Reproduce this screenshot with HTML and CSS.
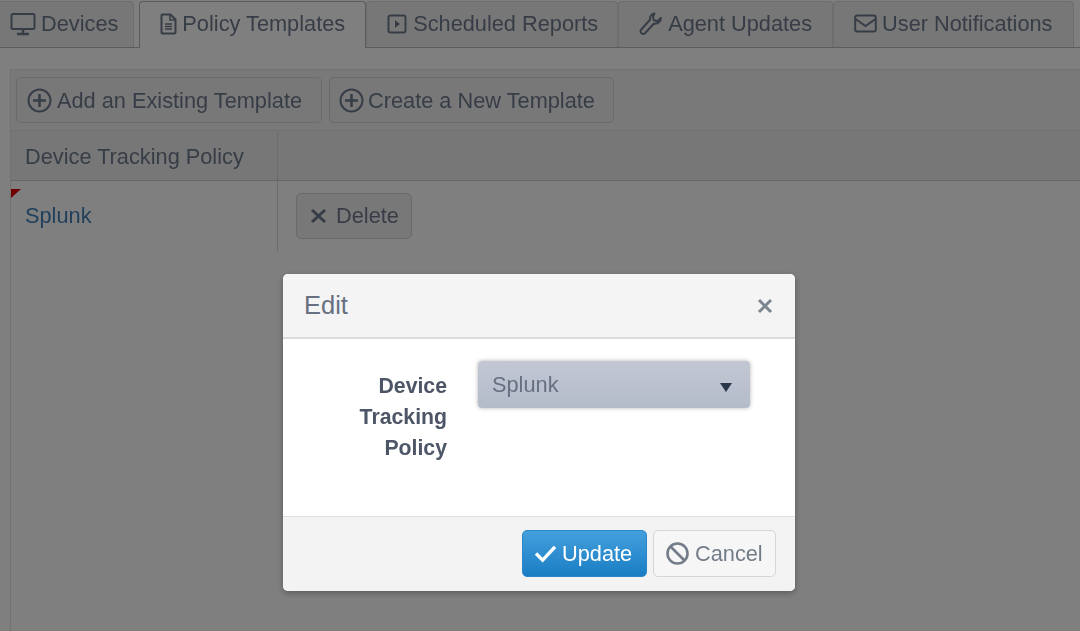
FILE: index.html
```html
<!DOCTYPE html>
<html lang="en">
<head>
    <meta charset="UTF-8">
    <title>Policy Templates</title>
    <link rel="stylesheet" href="styles.css">
</head>
<body>
    <ul class="tabs">
        <li class="tab tab-first">
            <svg class="icon" width="26" height="24" viewBox="0 0 26 24" fill="none" stroke="currentColor" stroke-width="2"><rect x="1.500" y="2" width="23" height="15" rx="1.500"/><path d="M13 17v4M7 22h12" stroke-width="2.500"/></svg>
            Devices
        </li>
        <li class="tab tab-active">
            <svg class="icon" width="17" height="22" viewBox="0 0 17 22" fill="none" stroke="currentColor" stroke-width="2"><path d="M2.500 1.500h8l5 5v13a1 1 0 0 1-1 1h-12a1 1 0 0 1-1-1v-17a1 1 0 0 1 1-1z"/><path d="M10 2v5h5M5 11h7M5 13.500h7M5 16h7" stroke-width="1.500"/></svg>
            Policy Templates
        </li>
        <li class="tab tab-reports">
            <svg class="icon" width="20" height="20" viewBox="0 0 20 20" fill="none" stroke="currentColor" stroke-width="2"><rect x="1.500" y="1.500" width="17" height="17" rx="2"/><path d="M8 6l5 4-5 4z" fill="currentColor" stroke="none"/></svg>
            Scheduled Reports
        </li>
        <li class="tab">
            <svg class="icon" width="24" height="24" viewBox="0 0 23 24" fill="none" stroke="currentColor" stroke-width="2" stroke-linejoin="round"><path d="M15 1.500c-3 .3-5 3-4.300 6L1.800 17.500a2.700 2.700 0 0 0 .2 3.700 2.700 2.700 0 0 0 3.700-.2l8.800-9.500c3.300 1 6.800-1.700 7-5.500l-4 3.200-3.300-1.200-.7-3.200z"/></svg>
            Agent Updates
        </li>
        <li class="tab">
            <svg class="icon" width="23" height="19" viewBox="0 0 23 19" fill="none" stroke="currentColor" stroke-width="2"><rect x="1.200" y="1.500" width="20.600" height="16" rx="2"/><path d="M1.500 5l10 7 10-7"/></svg>
            User Notifications
        </li>
    </ul>

    <div class="panel">
        <div class="toolbar">
            <button class="btn">
                <svg class="icon" width="25" height="25" viewBox="0 0 25 25" fill="none" stroke="currentColor"><circle cx="12.500" cy="12.500" r="11" stroke-width="2"/><path d="M12.500 6v13M6 12.500h13" stroke-width="2.600"/></svg>
                Add an Existing Template
            </button>
            <button class="btn btn-new">
                <svg class="icon" width="25" height="25" viewBox="0 0 25 25" fill="none" stroke="currentColor"><circle cx="12.500" cy="12.500" r="11" stroke-width="2"/><path d="M12.500 6v13M6 12.500h13" stroke-width="2.600"/></svg>
                Create a New Template
            </button>
        </div>
        <div class="grid-row grid-head">
            <div class="cell cell-name">Device Tracking Policy</div>
            <div class="cell"></div>
        </div>
        <div class="grid-row">
            <div class="cell cell-name cell-dirty"><a class="link">Splunk</a></div>
            <div class="cell cell-action">
                <button class="btn btn-delete">
                    <svg class="icon" width="17" height="16" viewBox="0 0 17 16" fill="none" stroke="currentColor" stroke-width="3"><path d="M2 2l13 12M15 2L2 14"/></svg>
                    Delete
                </button>
            </div>
        </div>
    </div>

    <div class="backdrop"></div>

    <div class="modal">
        <div class="modal-head">
            <span class="modal-title">Edit</span>
            <svg class="modal-close" width="16" height="16" viewBox="0 0 16 16" fill="none" stroke="currentColor" stroke-width="3"><path d="M2 2l12 12M14 2L2 14"/></svg>
        </div>
        <div class="modal-body">
            <label class="field-label">Device Tracking Policy</label>
            <div class="select">
                <span>Splunk</span>
                <span class="caret"></span>
            </div>
        </div>
        <div class="modal-foot">
            <button class="btn-update">
                <svg class="icon" width="23" height="19" viewBox="0 0 24 20" fill="none" stroke="currentColor" stroke-width="3.600"><path d="M2 10l7 7L22 3"/></svg>
                Update
            </button>
            <button class="btn-cancel">
                <svg class="icon" width="23" height="23" viewBox="0 0 23 23" fill="none" stroke="currentColor" stroke-width="2.600"><circle cx="11.500" cy="11.500" r="10"/><path d="M4.500 4.500l14 14"/></svg>
                Cancel
            </button>
        </div>
    </div>
</body>
</html>
```

FILE: styles.css
```css
html, body {
    height: 100%;
}

body {
    margin: 0;
    overflow: hidden;
    background-color: #ffffff;
    color: #6f7b8d;
    font-family: "Liberation Sans", Arial, sans-serif;
    font-size: 21.75px;
    filter: blur(0.5px); /* the capture is soft */
}

.icon {
    flex-shrink: 0;
}

/* tabs */
.tabs {
    display: flex;
    height: 47px;
    margin: 0;
    padding: 0;
    list-style: none;
    border-bottom: 1px solid #b8b8b8;
}

.tab {
    display: flex;
    align-items: center;
    gap: 5px;
    height: 46px;
    margin-top: 1px;
    padding: 0 20px 2px;
    background-color: #eeeeee;
    border: 1px solid #dcdcdc;
    border-bottom: none;
    border-radius: 4px 4px 0 0;
    box-sizing: border-box;
}

.tab-first {
    margin-right: 5px;
    margin-left: -6px;
    padding: 0 15px 2px;
}

.tab-active {
    height: 47px;
    padding-bottom: 3px;
    background-color: #ffffff;
    border-color: #b8b8b8;
    position: relative;
    z-index: 1;
}

.tab-reports {
    gap: 6px;
    padding-right: 19px;
}

/* panel with toolbar and grid */
.panel {
    margin: 21px 0 0 10px;
    height: 562px;
    border-top: 1px solid #e4e4e4;
    border-left: 1px solid #e4e4e4;
}

.toolbar {
    display: flex;
    gap: 7px;
    height: 60px;
    padding: 7px 5px 0;
    background-color: #f3f3f3;
    box-sizing: border-box;
}

.btn {
    display: flex;
    align-items: center;
    gap: 5px;
    height: 46px;
    padding: 1px 19px 0 10px;
    color: inherit;
    background-color: #f1f1f1;
    border: 1px solid #d4d4d4;
    border-radius: 5px;
    font: inherit;
}

.btn-new {
    gap: 4px;
    padding-right: 18px;
    padding-left: 9px;
}

.grid-row {
    display: flex;
    height: 70px;
    box-sizing: border-box;
}

.grid-head {
    height: 51px;
    padding-top: 2px;
    background-color: #eeeeee;
    border-top: 1px solid #e4e4e4;
    border-bottom: 1px solid #cfcfcf;
}

.cell {
    display: flex;
    align-items: center;
    flex: 1;
}

.cell-name {
    flex: 0 0 267px;
    padding-left: 14px;
    border-right: 1px solid #d8d8d8;
    box-sizing: border-box;
}

.cell-dirty {
    position: relative;
}

/* little red corner on a changed cell */
.cell-dirty::before {
    content: "";
    position: absolute;
    top: 8px;
    left: 0;
    border-top: 9px solid #e00000;
    border-right: 10px solid transparent;
}

.link {
    color: #4380b6;
}

.cell-action {
    padding-left: 18px;
}

.btn-delete {
    gap: 9px;
    padding: 0 12px 0 13px;
}

.backdrop {
    position: fixed;
    top: 0;
    right: 0;
    bottom: 0;
    left: 0;
    z-index: 10;
    background-color: rgba(0, 0, 0, 0.5);
}

/* modal */
.modal {
    position: fixed;
    top: 274px;
    left: 283px;
    z-index: 20;
    display: flex;
    flex-direction: column;
    width: 512px;
    height: 317px;
    background-color: #ffffff;
    border-radius: 5px;
    box-shadow: 0 2px 6px rgba(0, 0, 0, 0.3);
    overflow: hidden;
}

.modal-head {
    display: flex;
    align-items: center;
    justify-content: space-between;
    height: 65px;
    padding: 0 22px 0 21px;
    color: #667080;
    background-color: #f4f4f4;
    border-bottom: 2px solid #dcdcdc;
    box-sizing: border-box;
}

.modal-title {
    font-size: 25.5px;
}

.modal-close {
    color: #7d8590;
}

.modal-body {
    display: flex;
    gap: 31px;
    flex: 1;
    padding-top: 22px;
}

.field-label {
    width: 120px;
    margin-left: 44px;
    padding-top: 10px;
    color: #4d5666;
    font-size: 21.25px;
    font-weight: bold;
    line-height: 31px;
    text-align: right;
}

.select {
    display: flex;
    align-items: center;
    justify-content: space-between;
    width: 272px;
    height: 47px;
    padding: 1px 18px 0 14px;
    color: #667080;
    background: linear-gradient(#c2c7d3, #b4bbc9);
    border-radius: 4px;
    box-shadow: 0 0 4px rgba(0, 0, 0, 0.3);
    box-sizing: border-box;
}

.caret {
    margin-top: 4px;
    border-top: 9px solid #2b3648;
    border-right: 6px solid transparent;
    border-left: 6px solid transparent;
}

.modal-foot {
    display: flex;
    justify-content: flex-end;
    gap: 6px;
    height: 75px;
    padding: 13px 19px 0 0;
    background-color: #f3f3f3;
    border-top: 1px solid #dedede;
    box-sizing: border-box;
}

.btn-update,
.btn-cancel {
    display: flex;
    align-items: center;
    gap: 5px;
    height: 47px;
    border-radius: 5px;
    font: inherit;
    box-sizing: border-box;
}

.btn-update {
    width: 125px;
    padding: 0 0 0 11px;
    color: #ffffff;
    background: linear-gradient(#44a0dc, #1a7dc4);
    border: 1px solid #2a86c8;
}

.btn-cancel {
    width: 123px;
    gap: 6px;
    padding: 0 0 0 12px;
    color: #737c88;
    background-color: #f6f6f6;
    border: 1px solid #d6d6d6;
}
```
